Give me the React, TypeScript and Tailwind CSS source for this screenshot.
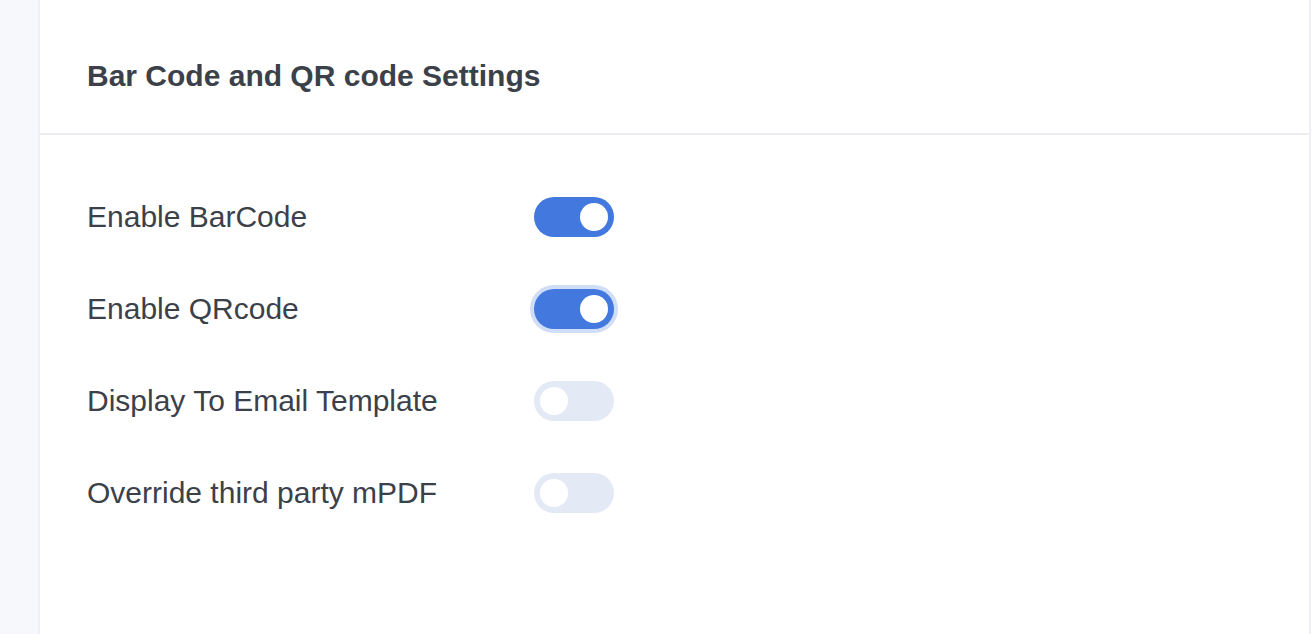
import React from 'react';

interface ToggleProps {
  on: boolean;
  focused?: boolean;
}

const Toggle: React.FC<ToggleProps> = ({ on, focused = false }) => (
  <div
    className={`flex h-[40px] w-[80px] items-center rounded-full px-[6px] ${
      on ? 'justify-end bg-[#4379de]' : 'justify-start bg-[#e4eaf5]'
    } ${focused ? 'ring-4 ring-[#d0ddf7]' : ''}`}
  >
    <div className="h-[28px] w-[28px] rounded-full bg-white" />
  </div>
);

const settings = [
  { label: 'Enable BarCode', on: true },
  { label: 'Enable QRcode', on: true, focused: true },
  { label: 'Display To Email Template', on: false },
  { label: 'Override third party mPDF', on: false },
];

const App: React.FC = () => {
  return (
    <div
      className="flex h-[634px] w-full bg-white text-[#3c4149]"
      style={{ fontFamily: '"Liberation Sans", Arial, sans-serif' }}
    >
      <div className="w-[40px] shrink-0 border-r-2 border-[#eef0f6] bg-[#f7f8fb]" />
      <div className="flex w-[1271px] shrink-0 flex-col border-r-2 border-[#eef0f6]">
        <div className="flex h-[135px] items-center border-b-2 border-[#ebedf0] px-[47px] pt-[18px]">
          <h2 className="text-[30px] font-bold leading-none">Bar Code and QR code Settings</h2>
        </div>
        <div className="flex flex-col gap-[52px] px-[47px] pt-[62px]">
          {settings.map((s) => (
            <div key={s.label} className="flex h-[40px] items-center">
              <span className="w-[447px] text-[30px] leading-none">{s.label}</span>
              <Toggle on={s.on} focused={s.focused} />
            </div>
          ))}
        </div>
      </div>
      <div className="flex-1 bg-white" />
    </div>
  );
};

export default App;
